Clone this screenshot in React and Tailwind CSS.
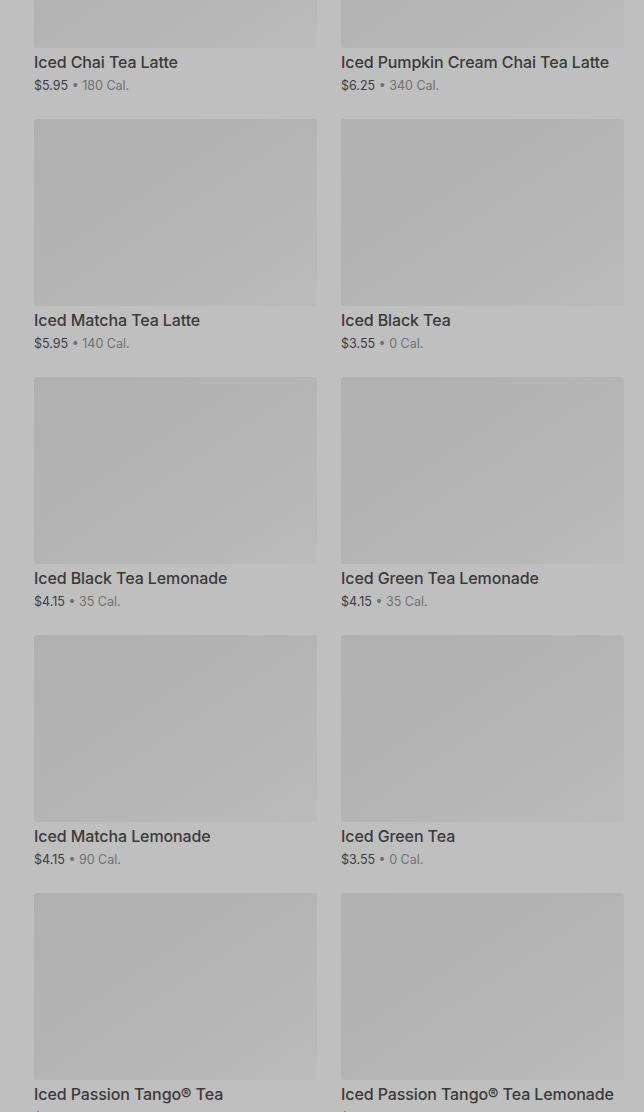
import React from 'react'

const items = [
  { name: 'Iced Chai Tea Latte', price: '$5.95', cal: '180 Cal.' },
  { name: 'Iced Pumpkin Cream Chai Tea Latte', price: '$6.25', cal: '340 Cal.' },
  { name: 'Iced Matcha Tea Latte', price: '$5.95', cal: '140 Cal.' },
  { name: 'Iced Black Tea', price: '$3.55', cal: '0 Cal.' },
  { name: 'Iced Black Tea Lemonade', price: '$4.15', cal: '35 Cal.' },
  { name: 'Iced Green Tea Lemonade', price: '$4.15', cal: '35 Cal.' },
  { name: 'Iced Matcha Lemonade', price: '$4.15', cal: '90 Cal.' },
  { name: 'Iced Green Tea', price: '$3.55', cal: '0 Cal.' },
  { name: 'Iced Passion Tango® Tea', price: '$3.55', cal: '0 Cal.' },
  { name: 'Iced Passion Tango® Tea Lemonade', price: '$4.15', cal: '35 Cal.' },
]

function MenuCard({ item }) {
  return (
    <div className="flex flex-col">
      <div className="h-[187px] rounded-[3px] bg-gradient-to-br from-[#b0b0b0] via-[#b4b4b4] to-[#bbbbbb]" />
      <div className="mt-[4px] text-[16px] leading-[20px] font-medium tracking-[-0.1px] text-[#3a3a3a]">
        {item.name}
      </div>
      <div className="mt-[4px] text-[12.5px] leading-[20px] text-[#3d3d3d]">
        {item.price}
        <span className="text-[#707070]"> • {item.cal}</span>
      </div>
    </div>
  )
}

export default function App() {
  return (
    <div className="h-[1112px] overflow-hidden bg-[#bfbfbf] font-['Inter','Liberation_Sans',sans-serif]">
      <div className="mt-[-139px] pl-[34px] pr-[20px] grid grid-cols-2 gap-x-[24px] gap-y-[23px]">
        {items.map((item) => (
          <MenuCard key={item.name} item={item} />
        ))}
      </div>
    </div>
  )
}
